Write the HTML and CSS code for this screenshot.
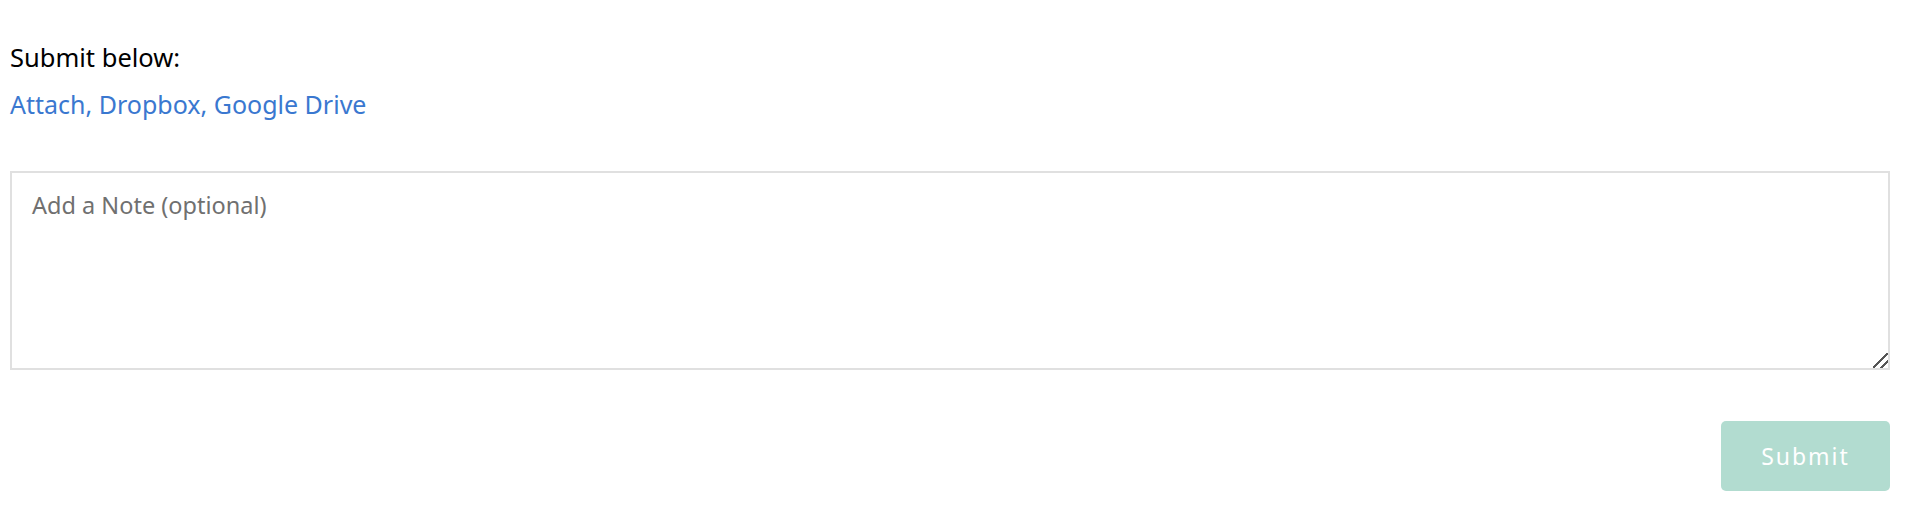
FILE: index.html
```html
<!DOCTYPE html>
<html lang="en">
<head>
    <meta charset="UTF-8">
    <title>Submit</title>
    <link rel="stylesheet" href="styles.css">
</head>
<body>
    <div class="submit-box">
        <p class="label">Submit below:</p>
        <p class="sources"><a href="#">Attach</a>, <a href="#">Dropbox</a>, <a href="#">Google Drive</a></p>
        <textarea class="note" placeholder="Add a Note (optional)"></textarea>
        <div class="actions">
            <button class="submit-button" disabled>Submit</button>
        </div>
    </div>
</body>
</html>
```

FILE: styles.css
```css
body {
    margin: 0;
    padding: 0 22px 0 10px;
    font-family: 'Noto Sans', sans-serif;
    background: #fff;
    color: #000;
}

.submit-box {
    padding-top: 40px;
}

.label {
    margin: 0;
    font-size: 25.5px;
    line-height: 34px;
}

.sources {
    margin: 13px 0 0;
    font-size: 25px;
    line-height: 34px;
    color: #3a78d0;
}

.sources a {
    color: #3a78d0;
    text-decoration: none;
}

.note {
    display: block;
    box-sizing: border-box;
    width: 100%;
    height: 199px;
    margin-top: 50px;
    padding: 15px 20px;
    border: 2px solid #e0e0e0;
    font-family: 'Noto Sans', sans-serif;
    font-size: 23.5px;
    line-height: 34px;
    color: #333;
    resize: vertical;
}

.note::placeholder {
    color: #707070;
}

.note::-webkit-resizer {
    background: linear-gradient(135deg, transparent 0 46%, #555 46% 54%, transparent 54% 72%, #555 72% 80%, transparent 80%);
}

.actions {
    display: flex;
    justify-content: flex-end;
    margin-top: 51px;
}

.submit-button {
    width: 169px;
    height: 70px;
    border: none;
    border-radius: 5px;
    background-color: #b2dcd0;
    color: #fff;
    font-family: 'Noto Sans', sans-serif;
    font-size: 23px;
    letter-spacing: 2px;
}
```
